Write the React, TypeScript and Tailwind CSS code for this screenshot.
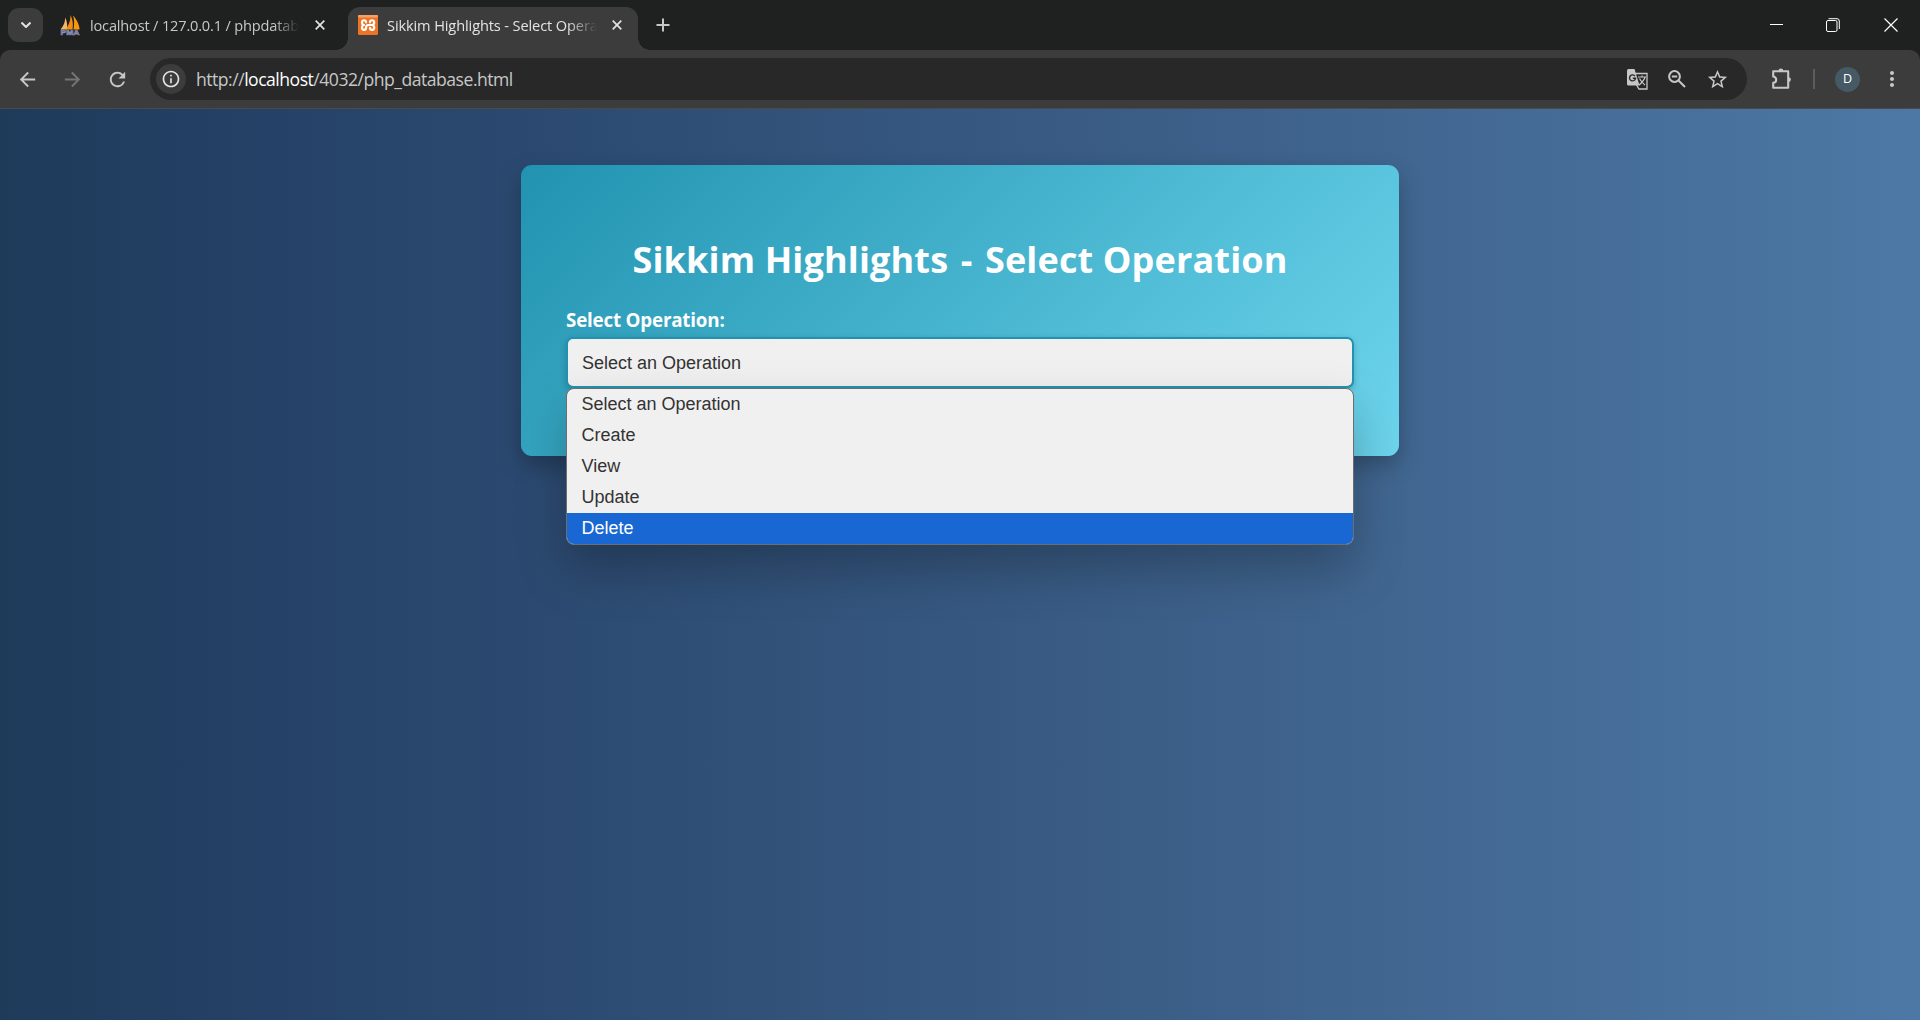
import { MdArrowBack, MdArrowForward, MdRefresh, MdStarBorder, MdInfoOutline, MdMoreVert } from "react-icons/md";

const options = ["Select an Operation", "Create", "View", "Update", "Delete"];

function SailsIcon() {
  return (
    <svg viewBox="0 0 20 20" className="h-5 w-5 shrink-0 overflow-visible">
      <path d="M0.5 14.500C4 10.5 5 7 5.2 2.5C7 6 7.5 9.500 7 14.500Z" fill="#f7b56a" />
      <path d="M5.500 14.500C9.500 9.500 10.500 5 10.500 0C12.500 4 13.500 9 12.500 14.500Z" fill="#f29111" />
      <path d="M13 0.500C16 3.500 19.500 9.500 19.500 14.500H13.500C14.500 9 14.300 4 13 0.500Z" fill="#f9980e" />
      <text x="0.500" y="19.500" fontSize="7.500" textLength="19" lengthAdjust="spacingAndGlyphs" fontWeight="700" fontFamily="Liberation Sans, sans-serif" fill="#4d5488" stroke="#8f94ba" strokeWidth="0.600">PMA</text>
    </svg>
  );
}

function XamppIcon() {
  return (
    <svg viewBox="0 0 20 20" className="h-5 w-5 shrink-0">
      <rect width="20" height="20" rx="1.500" fill="#ee7423" />
      <rect width="20" height="2.500" rx="1" fill="#f6a069" />
      <path d="M8 7.300C8 4.600 4 4.500 4 7.300C4 8.900 5 10 6 10C5 10 4 11.300 4 12.800C4 15.700 8 15.600 8 12.800C8 11 9.200 10 10.500 10H13.800M12 7.300C12 4.600 16.200 4.500 16.200 7.300C16.200 8.900 15 10 13.800 10C15 10 16.200 11.300 16.200 12.800C16.200 15.700 12 15.600 12 12.800" fill="none" stroke="white" strokeWidth="2.200" strokeLinecap="round" strokeLinejoin="round" />
    </svg>
  );
}

function Cross() {
  return (
    <svg viewBox="0 0 10 10" className="h-[10px] w-[10px] shrink-0" fill="none" stroke="#e3e3e3" strokeWidth="1.700">
      <path d="M0.700 0.700L9.300 9.300M9.300 0.700L0.700 9.300" />
    </svg>
  );
}

function TranslateIcon() {
  return (
    <svg viewBox="0 0 21 21" className="h-[21px] w-[21px]">
      <path d="M8 4.500H20V20H12L9.500 16" fill="none" stroke="#c7c7c7" strokeWidth="1.300" />
      <path d="M11 8H19M15 6.500V8M18 8C17 12 14.500 14 12 16M12.500 9.500C14 12.500 16 14 18 16" fill="none" stroke="#c7c7c7" strokeWidth="1.200" />
      <path d="M1.500 0H7.500L12.500 16.500H1.500Q0 16.500 0 15V1.500Q0 0 1.500 0Z" fill="#c7c7c7" />
      <path d="M8 7.200A3 3 0 1 0 8.500 9.300H5.800" fill="none" stroke="#282828" strokeWidth="1.400" />
    </svg>
  );
}

function ZoomOutIcon() {
  return (
    <svg viewBox="0 0 18 18" className="ml-[20px] mr-px h-[18px] w-[18px]" fill="none" stroke="#c7c7c7" strokeWidth="2">
      <circle cx="6.500" cy="6.500" r="5.400" />
      <path d="M3.800 6.500H9.200M10.500 10.500L17 17" />
    </svg>
  );
}

function PuzzleIcon() {
  return (
    <svg viewBox="0 0 22 22" className="h-[22px] w-[22px]">
      <path d="M2.200 3.200H17.200V19.800H2.200V14.800C4.800 14.500 5.200 13 5.200 11.700C5.200 10.400 4.500 9 2.200 8.500Z" fill="none" stroke="#c7c7c7" strokeWidth="2.100" strokeLinejoin="round" />
      <path d="M7.500 3A2.300 2.300 0 0 1 12.300 3ZM17.500 9.200A2.400 2.400 0 0 1 17.500 14Z" fill="#c7c7c7" />
    </svg>
  );
}

function TabStrip() {
  return (
    <div className="flex h-[50px] bg-[#1f2120]">
      <div className="ml-2 mt-2 flex h-[34px] w-[35px] items-center justify-center rounded-[11px] bg-[#3c3c3c] text-[#e3e3e3]">
        <svg viewBox="0 0 10 6" className="h-[6px] w-[10px]" fill="none" stroke="currentColor" strokeWidth="2"><path d="M0.500 0.500L5 5L9.500 0.500" /></svg>
      </div>
      <div className="ml-[17px] flex h-[50px] w-[288px] items-center">
        <SailsIcon />
        <div className="ml-[10px] w-[209px] overflow-hidden whitespace-nowrap pt-px text-[14.600px] tracking-[-0.18px] text-[#c7c7c7] [mask-image:linear-gradient(to_right,black_88%,transparent)]">localhost / 127.0.0.1 / phpdatab</div>
        <div className="ml-[16px] flex"><Cross /></div>
      </div>
      <div className="relative mt-[7px] flex h-[43px] w-[290px] items-center rounded-t-[12px] bg-[#3c3c3c] pb-[7px] pl-[10px]">
        <div className="absolute -left-3 bottom-0 h-3 w-3 bg-[radial-gradient(circle_at_0_0,transparent_11.5px,#3c3c3c_12px)]" />
        <div className="absolute -right-3 bottom-0 h-3 w-3 bg-[radial-gradient(circle_at_100%_0,transparent_11.5px,#3c3c3c_12px)]" />
        <XamppIcon />
        <div className="ml-[9px] w-[210px] overflow-hidden whitespace-nowrap pt-px text-[14.600px] tracking-[-0.12px] text-[#e3e3e3] [mask-image:linear-gradient(to_right,black_86%,transparent)]">Sikkim Highlights - Select Opera</div>
        <div className="ml-[15px] flex"><Cross /></div>
      </div>
      <svg viewBox="0 0 14 14" className="ml-[18px] mt-[18px] h-[14px] w-[14px]" fill="none" stroke="#c7c7c7" strokeWidth="2"><path d="M7 0.500V13.500M0.500 7H13.500" /></svg>
      <div className="ml-auto flex items-center pr-[22px]">
        <div className="-mt-px h-px w-[13px] bg-white" />
        <svg viewBox="0 0 14 14" className="ml-[43px] h-[14px] w-[14px]" fill="none" stroke="white"><rect x="0.500" y="2.500" width="10.500" height="11" rx="1.500" /><path d="M2.500 0.700H11Q13.300 0.700 13.300 3V11" /></svg>
        <svg viewBox="0 0 14 14" className="ml-[44px] h-[14px] w-[14px]" fill="none" stroke="white" strokeWidth="1.200"><path d="M0.500 0.500L13.500 13.500M13.500 0.500L0.500 13.500" /></svg>
      </div>
    </div>
  );
}

function Toolbar() {
  return (
    <div className="bg-[#1f2120]">
      <div className="flex h-[59px] items-center rounded-t-[10px] border-b border-[#4a4a4a] bg-[#3c3c3c] pr-[16px] text-[#c7c7c7]">
        <MdArrowBack className="ml-[16px]" size={23} />
        <MdArrowForward className="ml-[22px] text-[#757575]" size={23} />
        <MdRefresh className="ml-[22px]" size={23} />
        <div className="ml-[21px] flex h-[42px] w-[1597px] items-center rounded-full bg-[#282828] pl-[6px] pr-[18px]">
          <div className="flex h-[30px] w-[30px] items-center justify-center rounded-full bg-[#3c3c3c] text-[#e3e3e3]"><MdInfoOutline size={20} /></div>
          <div className="ml-[10px] whitespace-nowrap text-[17.600px] tracking-[-0.500px] text-[#c7c7c7]">http://<span className="text-white">localhost</span>/4032/php_database.html</div>
          <div className="ml-auto flex items-center">
            <TranslateIcon />
            <ZoomOutIcon />
            <MdStarBorder className="ml-[19px]" size={23} />
          </div>
        </div>
        <div className="ml-[24px]"><PuzzleIcon /></div>
        <div className="ml-[20px] h-[20px] w-[2px] bg-[#5c5c5c]" />
        <div className="ml-[20px] flex h-[25px] w-[25px] items-center justify-center rounded-full bg-[#455a64] text-[12.500px] text-white">D</div>
        <MdMoreVert className="ml-auto" size={24} />
      </div>
    </div>
  );
}

export default function App() {
  return (
    <div className="flex h-[1020px] w-[1920px] flex-col overflow-hidden font-['Open_Sans','Noto_Sans',sans-serif]">
      <TabStrip />
      <Toolbar />
      <main className="flex-1 bg-[linear-gradient(to_right,#1e3b5a,#254167_14%,#3b5e87_60%,#4d78a5)] pt-[56px]">
        <section className="mx-auto h-[291px] w-[878px] rounded-[11px] bg-[linear-gradient(135deg,#2193b0,#6dd5ed)] px-[45px] pt-[68px] shadow-[0_9px_22px_rgba(0,0,0,0.25)]">
          <h1 className="-mt-px whitespace-nowrap text-center text-[36px] font-bold leading-[56px] tracking-[0.150px] text-white">Sikkim Highlights <span className="mx-[3px]">-</span> Select Operation</h1>
          <label className="mt-[18px] block text-[18.800px] font-bold leading-[28px] tracking-[-0.200px] text-white">Select Operation:</label>
          <div className="relative mt-[3px] h-[51px] w-[788px] rounded-[7px] border-2 border-[#2193b0] bg-[#f0f0f0] pl-[14px] font-['Liberation_Sans',Arial,sans-serif] text-[18px] leading-[48px] text-[#333] shadow-[0_2px_6px_rgba(0,0,0,0.2)]">
            Select an Operation
            <ul className="absolute -left-[2px] top-[49px] w-[788px] overflow-hidden rounded-[8px] border border-[#6e6e6e] bg-[#f0f0f0] shadow-[0_24px_50px_rgba(0,0,0,0.26)]">
              {options.map((option) => (
                <li key={option} className={option === "Delete" ? "h-[31px] bg-[#1967d2] pl-[14.500px] leading-[30px] text-white" : "h-[31px] pl-[14.500px] leading-[30px]"}>{option}</li>
              ))}
            </ul>
          </div>
        </section>
      </main>
    </div>
  );
}
